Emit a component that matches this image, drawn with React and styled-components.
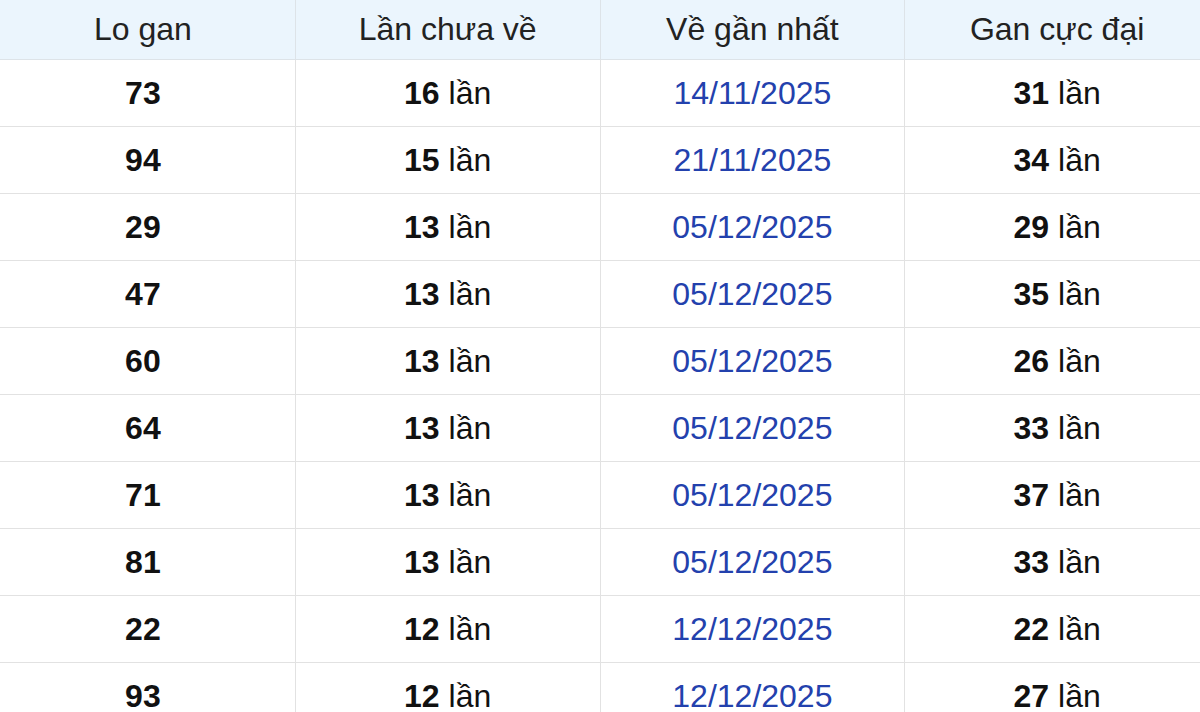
import React from 'react';
import styled, { createGlobalStyle } from 'styled-components';

const rows = [
  { lo: '73', miss: 16, last: '14/11/2025', max: 31 },
  { lo: '94', miss: 15, last: '21/11/2025', max: 34 },
  { lo: '29', miss: 13, last: '05/12/2025', max: 29 },
  { lo: '47', miss: 13, last: '05/12/2025', max: 35 },
  { lo: '60', miss: 13, last: '05/12/2025', max: 26 },
  { lo: '64', miss: 13, last: '05/12/2025', max: 33 },
  { lo: '71', miss: 13, last: '05/12/2025', max: 37 },
  { lo: '81', miss: 13, last: '05/12/2025', max: 33 },
  { lo: '22', miss: 12, last: '12/12/2025', max: 22 },
  { lo: '93', miss: 12, last: '12/12/2025', max: 27 },
];

const GlobalStyle = createGlobalStyle`
  html, body {
    margin: 0;
    padding: 0;
    background: #fff;
    overflow: hidden;
  }
  body {
    font-family: "Liberation Sans", Arial, sans-serif;
    color: #111;
  }
`;

const Wrapper = styled.div`
  width: 1200px;
  height: 712px;
  overflow: hidden;
`;

const Table = styled.table`
  width: 1220px;
  margin-left: -10px;
  border-collapse: collapse;
  table-layout: fixed;
  font-size: 32px;
`;

const HeadCell = styled.th`
  height: 59px;
  padding: 0;
  background: #ebf5fd;
  font-weight: normal;
  color: #222;
  text-align: center;
  border: 1px solid #dde3e8;
  border-top: none;
`;

const Cell = styled.td`
  height: 66px;
  padding: 0;
  text-align: center;
  border: 1px solid #e2e2e2;
  color: ${(props) => (props.date ? '#2341ad' : '#111')};
`;

const Num = styled.b`
  font-weight: bold;
  color: #111;
`;

const App = () => {
  return (
    <Wrapper>
      <GlobalStyle />
      <Table>
        <thead>
          <tr>
            <HeadCell>Lo gan</HeadCell>
            <HeadCell>Lần chưa về</HeadCell>
            <HeadCell>Về gần nhất</HeadCell>
            <HeadCell>Gan cực đại</HeadCell>
          </tr>
        </thead>
        <tbody>
          {rows.map((r) => (
            <tr key={r.lo}>
              <Cell>
                <Num>{r.lo}</Num>
              </Cell>
              <Cell>
                <Num>{r.miss}</Num> lần
              </Cell>
              <Cell date>{r.last}</Cell>
              <Cell>
                <Num>{r.max}</Num> lần
              </Cell>
            </tr>
          ))}
        </tbody>
      </Table>
    </Wrapper>
  );
};

export default App;
